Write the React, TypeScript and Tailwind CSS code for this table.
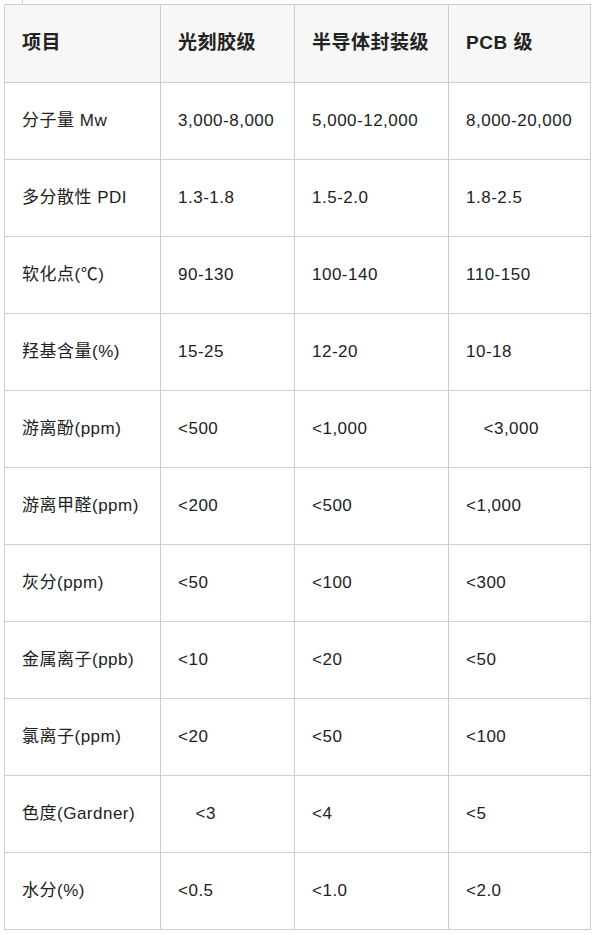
import React from 'react';

const headers = ['项目', '光刻胶级', '半导体封装级', 'PCB 级'];

// rows: label, photoresist, packaging, pcb
const rows: string[][] = [
  ['分子量 Mw', '3,000-8,000', '5,000-12,000', '8,000-20,000'],
  ['多分散性 PDI', '1.3-1.8', '1.5-2.0', '1.8-2.5'],
  ['软化点(℃)', '90-130', '100-140', '110-150'],
  ['羟基含量(%)', '15-25', '12-20', '10-18'],
  ['游离酚(ppm)', '<500', '<1,000', '\u3000<3,000'],
  ['游离甲醛(ppm)', '<200', '<500', '<1,000'],
  ['灰分(ppm)', '<50', '<100', '<300'],
  ['金属离子(ppb)', '<10', '<20', '<50'],
  ['氯离子(ppm)', '<20', '<50', '<100'],
  ['色度(Gardner)', '\u3000<3', '<4', '<5'],
  ['水分(%)', '<0.5', '<1.0', '<2.0'],
];

const widths = ['w-[156px]', 'w-[134px]', 'w-[154px]', 'w-[142px]'];

const font = { fontFamily: '"Liberation Sans", "Noto Sans CJK SC", sans-serif' };

const App = () => {
  return (
    <div className="bg-white min-h-[935px] w-[597px] text-[#222]" style={font}>
      <div className="h-[4px] ml-[22px] border-l border-[#cfcfcf]" />
      <table
        className="ml-[4px] border-collapse table-fixed w-[587px] text-[17px] tracking-[0.5px] text-[#222]"
        style={font}
      >
        <thead>
          <tr className="h-[78px] bg-[#f7f7f7]">
            {headers.map((h, i) => (
              <th
                key={i}
                className={`${widths[i]} border border-[#cfcfcf] px-[17px] text-left text-[19px] font-bold align-middle whitespace-nowrap`}
              >
                {h}
              </th>
            ))}
          </tr>
        </thead>
        <tbody>
          {rows.map((row, r) => (
            <tr key={r} className="h-[77px]">
              {row.map((cell, c) => (
                <td
                  key={c}
                  className="border border-[#cfcfcf] px-[17px] text-[17px] align-middle whitespace-nowrap"
                >
                  {cell}
                </td>
              ))}
            </tr>
          ))}
        </tbody>
      </table>
    </div>
  );
};

export default App;
